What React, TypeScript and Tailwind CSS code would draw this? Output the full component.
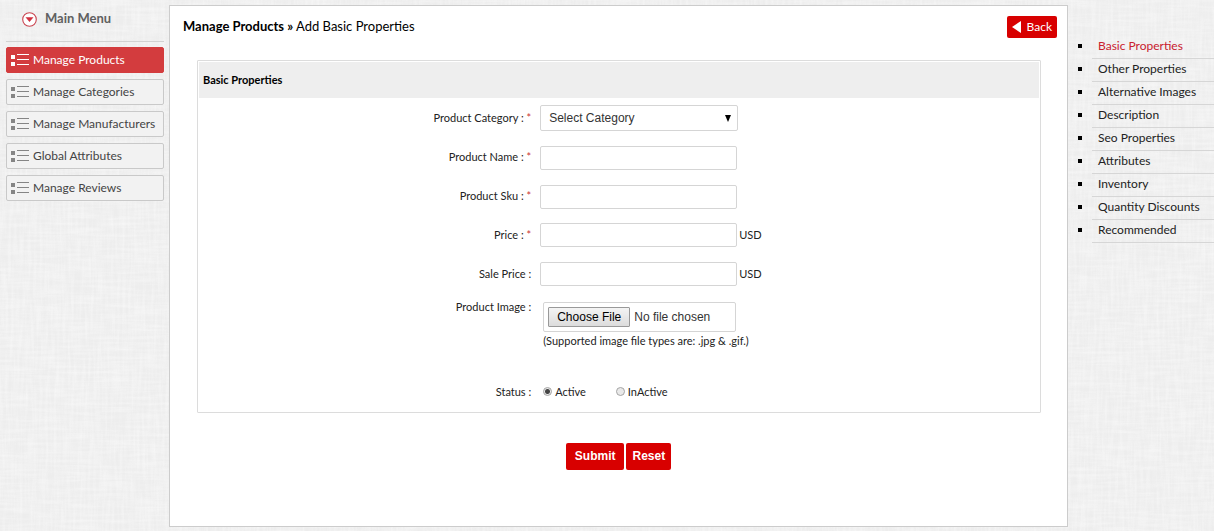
import type { ReactNode } from "react";

const menuItems = [
  "Manage Products",
  "Manage Categories",
  "Manage Manufacturers",
  "Global Attributes",
  "Manage Reviews",
];

const sections = [
  "Basic Properties",
  "Other Properties",
  "Alternative Images",
  "Description",
  "Seo Properties",
  "Attributes",
  "Inventory",
  "Quantity Discounts",
  "Recommended",
];

function LinenTexture() {
  return (
    <svg className="absolute inset-0 -z-10 h-full w-full" aria-hidden="true">
      <filter id="weft" x="0" y="0" width="100%" height="100%">
        <feTurbulence type="fractalNoise" baseFrequency="0.03 0.35" numOctaves="2" seed="4" />
        <feColorMatrix values="0 0 0 0 1  0 0 0 0 1  0 0 0 0 1  1.6 0 0 0 -0.55" />
      </filter>
      <filter id="warp" x="0" y="0" width="100%" height="100%">
        <feTurbulence type="fractalNoise" baseFrequency="0.35 0.03" numOctaves="2" seed="9" />
        <feColorMatrix values="0 0 0 0 1  0 0 0 0 1  0 0 0 0 1  1.6 0 0 0 -0.55" />
      </filter>
      <rect width="100%" height="100%" filter="url(#weft)" opacity="0.4" />
      <rect width="100%" height="100%" filter="url(#warp)" opacity="0.4" />
    </svg>
  );
}

function ListIcon() {
  return (
    <svg width="18" height="12" viewBox="0 0 18 12" className="shrink-0" fill="currentColor" shapeRendering="crispEdges" aria-hidden="true">
      <rect x="0" y="1" width="4" height="4" />
      <rect x="0" y="8" width="4" height="4" />
      <rect x="6" y="0" width="12" height="1" />
      <rect x="6" y="5" width="12" height="1" />
      <rect x="6" y="10" width="12" height="1" />
    </svg>
  );
}

function MainMenu() {
  return (
    <aside className="w-[158px] shrink-0">
      <div className="flex h-[42px] items-center gap-2 border-b border-[#d2d2d2] pb-[3px] pl-4">
        <svg width="15" height="15" viewBox="0 0 15 15" aria-hidden="true">
          <circle cx="7.5" cy="7.5" r="6.8" fill="#fff" stroke="#c94450" strokeWidth="1.1" />
          <path d="M3.5 5.3h8L7.5 10z" fill="#d02f3e" />
        </svg>
        <h2 className="text-[13px] font-bold text-[#606060]">Main Menu</h2>
      </div>
      <nav aria-label="Main menu">
        <ul className="mt-[5px] flex flex-col gap-[6px]">
          {menuItems.map((item, i) => (
            <li key={item}>
              <a
                href="#"
                className={
                  i === 0
                    ? "flex h-[26px] items-center gap-1 rounded-[2px] border border-[#d33c3e] bg-[#d33c3e] pl-1 text-[12px] whitespace-nowrap text-white"
                    : "flex h-[26px] items-center gap-1 rounded-[2px] border border-[#c9c9c9] bg-[#f2f2f2] pl-1 text-[12px] whitespace-nowrap text-[#444]"
                }
              >
                <span className={i === 0 ? "text-white" : "text-[#858585]"}>
                  <ListIcon />
                </span>
                {item}
              </a>
            </li>
          ))}
        </ul>
      </nav>
    </aside>
  );
}

function SectionNav() {
  return (
    <nav aria-label="Product sections" className="w-[146px] shrink-0 pt-[31px] pl-[10px]">
      <ul>
        {sections.map((s, i) => (
          <li key={s} className="flex items-center gap-[10px]">
            <span className="mb-1 size-1 shrink-0 bg-black" />
            <a
              href="#"
              className={
                i === 0
                  ? "flex h-[23px] flex-1 items-center border-b border-[#d6d6d6] pb-[3px] pl-[6px] text-[12px] whitespace-nowrap text-[#c9202e]"
                  : "flex h-[23px] flex-1 items-center border-b border-[#d6d6d6] pb-[3px] pl-[6px] text-[12px] whitespace-nowrap text-[#222]"
              }
            >
              {s}
            </a>
          </li>
        ))}
      </ul>
    </nav>
  );
}

function Row({ id, label, required, top, children }: {
  id: string;
  label: string;
  required?: boolean;
  top?: boolean;
  children: ReactNode;
}) {
  return (
    <div className={top ? "grid grid-cols-[333fr_500fr] items-start gap-x-[9px]" : "grid min-h-[26px] grid-cols-[333fr_500fr] items-center gap-x-[9px]"}>
      <label htmlFor={id} className="text-right text-[11px] leading-4 text-[#222]">
        {label} :{required && <span className="text-[#c33]"> *</span>}
      </label>
      <div>{children}</div>
    </div>
  );
}

const inputClass = "h-6 w-[197px] rounded-[2px] border border-[#d5d5d5] bg-white px-2 text-[12px]";

function ProductForm() {
  return (
    <form onSubmit={(e) => e.preventDefault()}>
      <section className="mr-[26px] ml-[27px] rounded-[1px] border border-[#dcdcdc] p-px pb-3">
        <h2 className="flex h-9 items-center bg-[#eee] px-1 text-[11px] font-bold text-black">Basic Properties</h2>
        <div className="mt-[7px] flex flex-col gap-[13px]">
          <Row id="category" label="Product Category" required>
            <div className="relative w-[198px]">
              <select id="category" className="block h-[26px] w-full appearance-none rounded-[2px] border border-[#d5d5d5] bg-white px-2 font-['Liberation_Sans',sans-serif] text-[12px] text-[#333]">
                <option>Select Category</option>
              </select>
              <svg width="8" height="7" viewBox="0 0 8 7" className="pointer-events-none absolute top-[10px] right-[6px]" aria-hidden="true">
                <path d="M1 0h6L4 7z" fill="#000" />
              </svg>
            </div>
          </Row>
          <Row id="name" label="Product Name" required>
            <input id="name" type="text" className={inputClass} />
          </Row>
          <Row id="sku" label="Product Sku" required>
            <input id="sku" type="text" className={inputClass} />
          </Row>
          <Row id="price" label="Price" required>
            <div className="flex items-center gap-[2px] text-[11px] text-[#222]">
              <input id="price" type="text" className={inputClass} />
              USD
            </div>
          </Row>
          <Row id="sale" label="Sale Price">
            <div className="flex items-center gap-[2px] text-[11px] text-[#222]">
              <input id="sale" type="text" className={inputClass} />
              USD
            </div>
          </Row>
        </div>
        <div className="mt-3">
          <Row id="image" label="Product Image" top>
            <div className="pt-[3px] pl-[3px]">
              <input
                id="image"
                type="file"
                className="block h-[30px] w-[193px] rounded-[2px] border border-[#d5d5d5] bg-white p-1 font-['Liberation_Sans',sans-serif] text-[12px] text-[#333] file:mr-1 file:h-5 file:rounded-[1px] file:border file:border-solid file:border-[#999] file:bg-linear-to-b file:from-[#f4f4f4] file:to-[#dcdcdc] file:px-2 file:text-[12px] file:text-black"
              />
              <p className="mt-px text-[11px] leading-4 text-[#222]">(Supported image file types are: .jpg &amp; .gif.)</p>
            </div>
          </Row>
        </div>
        <div
          role="radiogroup"
          aria-labelledby="status-label"
          className="mt-[35px] grid grid-cols-[333fr_500fr] items-center gap-x-[9px] text-[11px] leading-4 text-[#222]"
        >
          <span id="status-label" className="text-right">Status :</span>
          <div className="flex gap-[30px] pl-[3px]">
            {["Active", "InActive"].map((s, i) => (
              <label key={s} className="flex items-center gap-[3px]">
                <input
                  type="radio"
                  name="status"
                  defaultChecked={i === 0}
                  className="mb-[2px] size-[9px] appearance-none rounded-full border border-[#a5a5a5] bg-[#e9e9e9] checked:bg-[radial-gradient(circle,#444_0_2px,#e9e9e9_3px)]"
                />
                {s}
              </label>
            ))}
          </div>
        </div>
      </section>
      <div className="mt-[30px] flex justify-center gap-[2px] font-['Liberation_Sans',sans-serif] text-[12px] font-bold text-white">
        <button type="submit" className="h-[27px] rounded-[2px] bg-[#d80000] px-[9px] pb-px">Submit</button>
        <button type="reset" className="h-[27px] rounded-[2px] bg-[#d80000] px-[6px] pb-px">Reset</button>
      </div>
    </form>
  );
}

export default function App() {
  return (
    <div className="relative isolate flex min-h-screen items-start bg-[#ededed] pt-[5px] pb-1 pl-[6px] font-['Lato',sans-serif]">
      <LinenTexture />
      <div className="-mt-[5px]">
        <MainMenu />
      </div>
      <main className="ml-[5px] min-w-0 flex-1 border border-[#ccc] bg-white pb-[56px]">
        <header className="flex h-[54px] items-start justify-between pt-[10px] pr-[10px] pl-[13px]">
          <h1 className="text-[13px] leading-5 text-black">
            <strong className="font-bold">Manage Products »</strong> Add Basic Properties
          </h1>
          <a href="#" className="flex h-[22px] items-center gap-[6px] rounded-[2px] bg-[#d80000] px-[5px] text-[12px] text-white">
            <svg width="9" height="12" viewBox="0 0 9 12" aria-hidden="true">
              <path d="M9 0v12L0 6z" fill="#fff" />
            </svg>
            Back
          </a>
        </header>
        <ProductForm />
      </main>
      <SectionNav />
    </div>
  );
}
